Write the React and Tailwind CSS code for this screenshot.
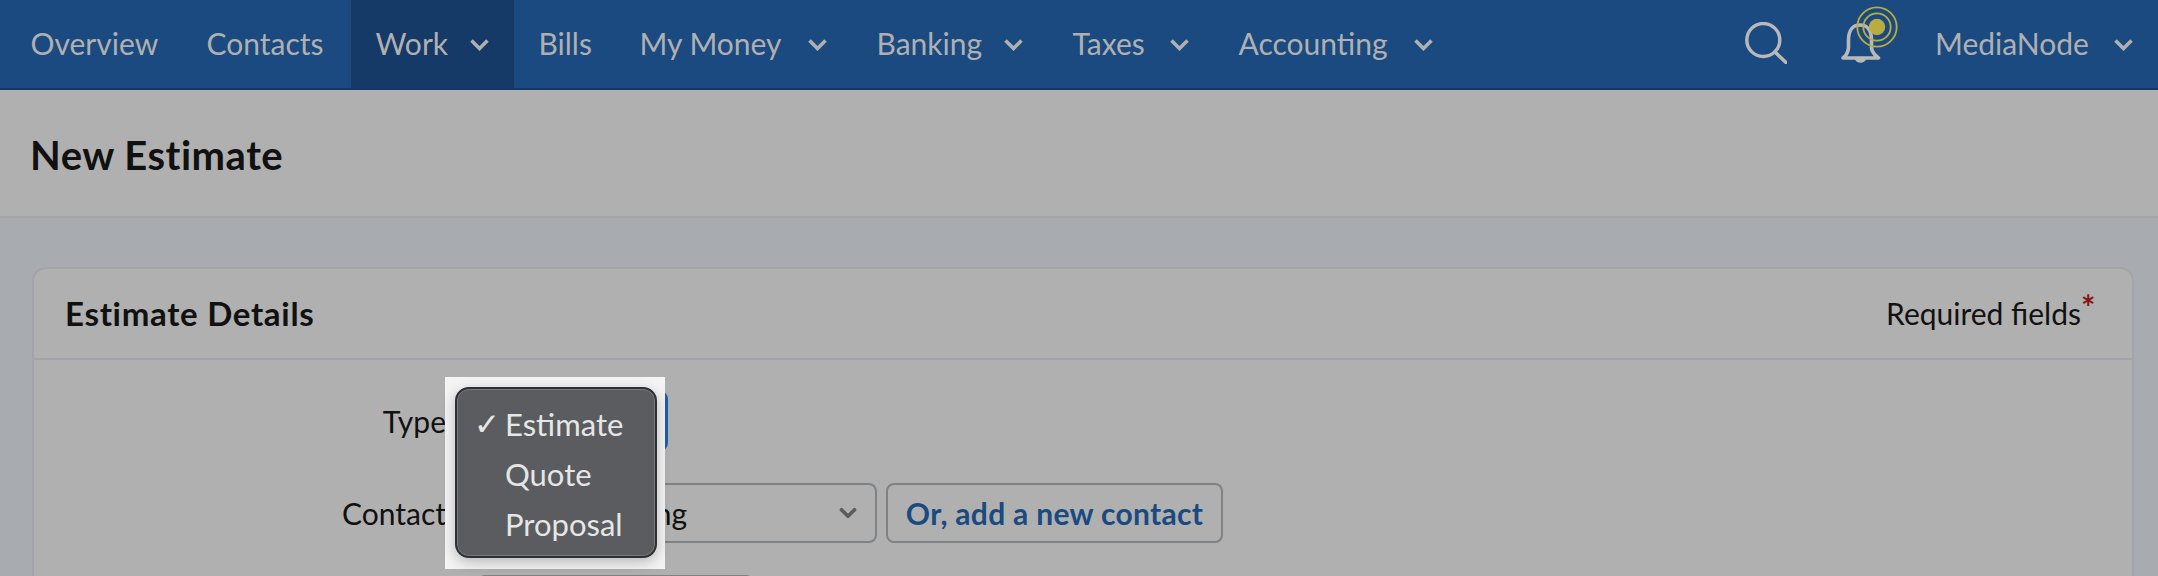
import { ChevronDown } from "lucide-react";

const navItems = [
  { label: "Overview", width: "w-[127px]" },
  { label: "Contacts", width: "w-[120px]" },
  { label: "Work", width: "w-[71px]", menu: true, active: true },
  { label: "Bills", width: "w-[52px]" },
  { label: "My Money", width: "w-[145px]", menu: true },
  { label: "Banking", width: "w-[104px]", menu: true },
  { label: "Taxes", width: "w-[74px]", menu: true },
  { label: "Accounting", width: "w-[152px]", menu: true },
];

function Chevron({ className }) {
  return (
    <svg viewBox="0 0 20 13" fill="none" className={className}>
      <path d="M2 2.5 10 10.5 18 2.5" stroke="currentColor" strokeWidth="3.6" />
    </svg>
  );
}

function NavItem({ label, width, menu, active }) {
  return (
    <a
      className={`flex items-center h-full px-[24.5px] gap-[22px] ${
        active ? "bg-[#153a68]" : ""
      }`}
    >
      <span className={`${width} whitespace-nowrap pb-[2px]`}>{label}</span>
      {menu && <Chevron className="w-[21px] h-[13px]" />}
    </a>
  );
}

function Nav() {
  return (
    <nav className="flex items-stretch h-[90px] pl-[6px] pr-[24px] bg-[#1a4a80] border-b-2 border-[#133563] text-[#b0b0b0] text-[30px]">
      {navItems.map((item) => (
        <NavItem key={item.label} {...item} />
      ))}
      <div className="flex items-center ml-auto">
        <svg viewBox="0 0 42 42" fill="none" className="w-[42px] h-[42px] mb-[3px] text-[#b9b9b9]">
          <circle cx="18.3" cy="18" r="16.5" stroke="currentColor" strokeWidth="3.4" />
          <path d="M30 30 41 40.5" stroke="currentColor" strokeWidth="3.6" strokeLinecap="round" />
        </svg>
        <div className="relative w-[40px] h-[42px] ml-[54px] mb-[3px] text-[#b9b9b9]">
          <svg viewBox="0 0 40 42" fill="none" className="w-full h-full">
            <path
              d="M2 36c4-3 5-6 5.5-10v-8C7.5 8 12 3 19 3s11.5 5 11.5 15v8c.5 4 3 7 7 10H2Z"
              stroke="currentColor"
              strokeWidth="3.6"
              strokeLinejoin="round"
            />
            <path d="M14 37c1 5 10 5 11 0Z" fill="currentColor" />
          </svg>
          <svg viewBox="0 0 42 42" fill="none" className="absolute left-[15px] top-[-16px] w-[42px] h-[42px]">
            <circle cx="21" cy="21" r="19.7" stroke="#b9ad3e" strokeWidth="1.8" />
            <circle cx="21" cy="21" r="13.7" stroke="#b9ad3e" strokeWidth="1.8" />
            <circle cx="21" cy="21" r="8.2" fill="#b9ad3e" />
          </svg>
        </div>
        <div className="flex items-center ml-[54px] gap-[23px]">
          <span className="w-[155px] whitespace-nowrap pb-[2px]">MediaNode</span>
          <Chevron className="w-[21px] h-[13px]" />
        </div>
      </div>
    </nav>
  );
}

function Field({ label, children }) {
  return (
    <div className="flex items-center gap-[10px] h-[60px]">
      <label className="w-[412px] text-right text-[30px]">{label}</label>
      {children}
    </div>
  );
}

function TypeMenu() {
  const options = ["Estimate", "Quote", "Proposal"];
  return (
    <div className="absolute left-[445px] top-[377px] pt-[10px] pb-[11px] pl-[10px] pr-[8px] bg-[#f4f4f4]">
      <div className="w-[202px] h-[171px] pt-[10px] rounded-[14px] bg-[#5a5c5f] border-2 border-[#2f3032] shadow-[inset_0_0_0_1px_#77797c,0_4px_14px_rgba(0,0,0,0.25)] text-[#e6e6e6] text-[31px] leading-[50px]">
        {options.map((option, i) => (
          <div key={option} className="flex items-center pl-[48px] relative">
            {i === 0 && <span className="absolute left-[17px] text-[31px] font-['DejaVu_Sans']">✓</span>}
            {option}
          </div>
        ))}
      </div>
    </div>
  );
}

export default function App() {
  return (
    <div
      className="relative h-[576px] overflow-hidden bg-[#a8abb0] text-[#111] text-[30px]"
      style={{ fontFamily: "Lato, 'Liberation Sans', sans-serif" }}
    >
      <Nav />
      <header className="flex items-center h-[128px] pl-[30px] pt-[3px] bg-[#b0b0b0] border-b-2 border-[#a5a5a8]">
        <h1 className="font-bold text-[40px] tracking-[0.5px]">New Estimate</h1>
      </header>
      <main className="pt-[49px] pl-[32px] pr-[24px]">
        <section className="rounded-t-[14px] bg-[#b0b0b0] border-2 border-[#a3a4aa]">
          <div className="flex items-center justify-between h-[91px] pl-[31px] pr-[51px] border-b-2 border-[#a3a4aa]">
            <h2 className="font-bold text-[33px] tracking-[0.7px]">Estimate Details</h2>
            <span className="relative">
              Required fields
              <span className="absolute left-full top-[-10px] text-[#8a1414] font-bold text-[34px]">*</span>
            </span>
          </div>
          <div className="pt-[31px] flex flex-col gap-[32px]">
            <Field label="Type">
              <div className="w-[212px] h-[60px] rounded-[8px] border-[4px] border-[#1a5fa8]" />
            </Field>
            <Field label="Contact">
              <div className="relative flex items-center justify-end w-[421px] h-[60px] pr-[14px] rounded-[8px] border-2 border-[#7f8284]">
                <span className="absolute right-[188px] whitespace-nowrap">Select existing</span>
                <ChevronDown size={26} strokeWidth={3.4} className="text-[#5a5c5e]" />
              </div>
              <button className="w-[337px] h-[60px] ml-[-1px] rounded-[8px] border-2 border-[#7f8284] text-[#1a4a80] font-bold tracking-[0.3px] whitespace-nowrap">
                Or, add a new contact
              </button>
            </Field>
            <Field label="">
              <div className="w-[277px] h-[60px] ml-[21px] rounded-[8px] border-2 border-[#7f8284]" />
            </Field>
          </div>
        </section>
      </main>
      <TypeMenu />
    </div>
  );
}
